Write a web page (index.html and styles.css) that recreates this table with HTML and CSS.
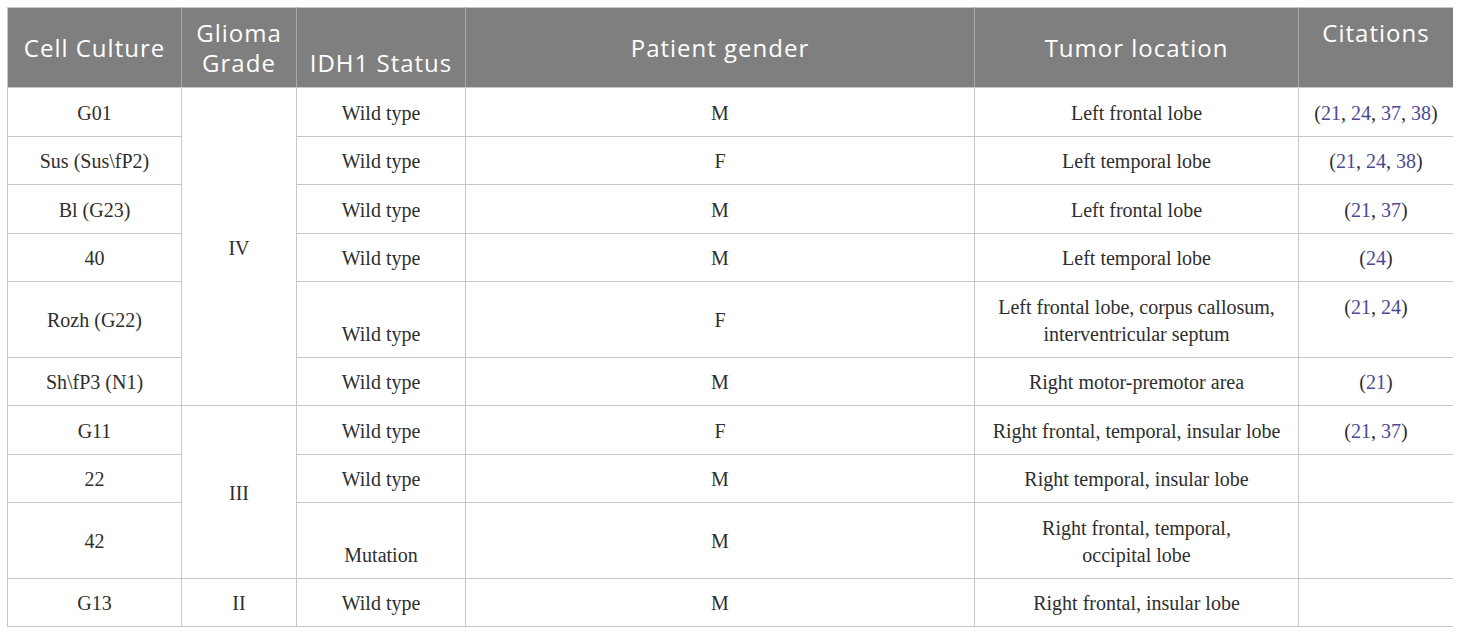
FILE: index.html
```html
<!DOCTYPE html>
<html>
<head>
<meta charset="utf-8">
<link rel="stylesheet" href="styles.css">
</head>
<body>
<table class="data">
  <colgroup>
    <col class="c1"><col class="c2"><col class="c3"><col class="c4"><col class="c5"><col class="c6">
  </colgroup>
  <thead>
    <tr>
      <th>Cell Culture</th>
      <th>Glioma Grade</th>
      <th class="bottom">IDH1 Status</th>
      <th>Patient gender</th>
      <th>Tumor location</th>
      <th class="top">Citations</th>
    </tr>
  </thead>
  <tbody>
    <tr>
      <td>G01</td>
      <td rowspan="6">IV</td>
      <td>Wild type</td>
      <td>M</td>
      <td>Left frontal lobe</td>
      <td>(<a>21</a>, <a>24</a>, <a>37</a>, <a>38</a>)</td>
    </tr>
    <tr>
      <td>Sus (Sus\fP2)</td>
      <td>Wild type</td>
      <td>F</td>
      <td>Left temporal lobe</td>
      <td>(<a>21</a>, <a>24</a>, <a>38</a>)</td>
    </tr>
    <tr>
      <td>Bl (G23)</td>
      <td>Wild type</td>
      <td>M</td>
      <td>Left frontal lobe</td>
      <td>(<a>21</a>, <a>37</a>)</td>
    </tr>
    <tr>
      <td>40</td>
      <td>Wild type</td>
      <td>M</td>
      <td>Left temporal lobe</td>
      <td>(<a>24</a>)</td>
    </tr>
    <tr>
      <td>Rozh (G22)</td>
      <td class="bottom">Wild type</td>
      <td>F</td>
      <td>Left frontal lobe, corpus callosum,<br>interventricular septum</td>
      <td class="top">(<a>21</a>, <a>24</a>)</td>
    </tr>
    <tr>
      <td>Sh\fP3 (N1)</td>
      <td>Wild type</td>
      <td>M</td>
      <td>Right motor-premotor area</td>
      <td>(<a>21</a>)</td>
    </tr>
    <tr>
      <td>G11</td>
      <td rowspan="3">III</td>
      <td>Wild type</td>
      <td>F</td>
      <td>Right frontal, temporal, insular lobe</td>
      <td>(<a>21</a>, <a>37</a>)</td>
    </tr>
    <tr>
      <td>22</td>
      <td>Wild type</td>
      <td>M</td>
      <td>Right temporal, insular lobe</td>
      <td></td>
    </tr>
    <tr>
      <td>42</td>
      <td class="bottom">Mutation</td>
      <td>M</td>
      <td>Right frontal, temporal,<br>occipital lobe</td>
      <td></td>
    </tr>
    <tr>
      <td>G13</td>
      <td>II</td>
      <td>Wild type</td>
      <td>M</td>
      <td>Right frontal, insular lobe</td>
      <td></td>
    </tr>
  </tbody>
</table>
</body>
</html>
```

FILE: styles.css
```css
html, body {
  background: #ffffff;
}
body {
  margin: 7px;
}
.data {
  border-collapse: collapse;
  table-layout: fixed;
  width: 1446px;
  border: 1px solid #c8c8c8;
}
.c1 { width: 174px; }
.c2 { width: 115px; }
.c3 { width: 169px; }
.c4 { width: 509px; }
.c5 { width: 324px; }
.c6 { width: 155px; }

.data th {
  background: #7f7f7f;
  color: #ffffff;
  font-family: "Open Sans", "Noto Sans", sans-serif;
  font-weight: 400;
  font-size: 24px;
  letter-spacing: 1px;
  line-height: 30px;
  padding: 10px 4px 9px;
  text-align: center;
  vertical-align: middle;
  border-left: 1px solid #a9a9a9;
  border-right: 1px solid #a9a9a9;
  border-top: 1px solid #c8c8c8;
  border-bottom: 1px solid #c8c8c8;
}
.data th:first-child { border-left-color: #c8c8c8; }
.data th:last-child { border-right-color: #c8c8c8; }

.data td {
  font-family: "Liberation Serif", "Times New Roman", serif;
  font-size: 20px;
  line-height: 27px;
  color: #2e2e2e;
  padding: 11.75px 6px 8.75px;
  text-align: center;
  vertical-align: middle;
  border: 1px solid #c8c8c8;
}
.data .top { vertical-align: top; }
.data .bottom { vertical-align: bottom; }
.data a {
  color: #4a4a94;
  text-decoration: none;
}
```
